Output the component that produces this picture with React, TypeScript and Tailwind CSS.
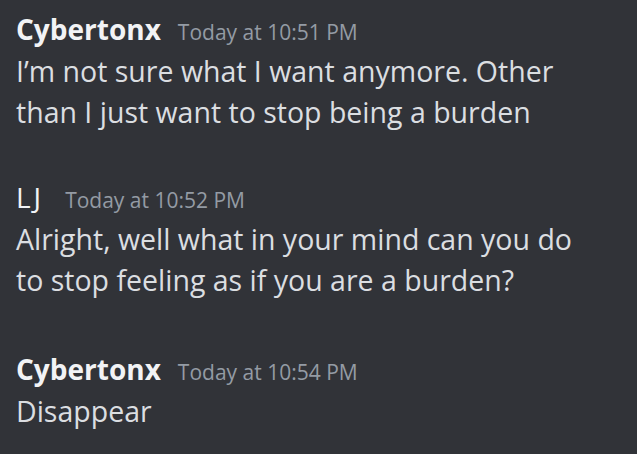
const messages = [
  {
    author: "Cybertonx",
    bold: true,
    time: "Today at 10:51 PM",
    gap: "",
    lines: [
      "I’m not sure what I want anymore. Other",
      "than I just want to stop being a burden",
    ],
  },
  {
    author: "LJ",
    bold: false,
    time: "Today at 10:52 PM",
    gap: "mt-[47px]",
    lines: [
      "Alright, well what in your mind can you do",
      "to stop feeling as if you are a burden?",
    ],
  },
  {
    author: "Cybertonx",
    bold: true,
    time: "Today at 10:54 PM",
    gap: "mt-[51px]",
    lines: ["Disappear"],
  },
];

export default function App() {
  return (
    <div
      className="w-[637px] h-[454px] overflow-hidden bg-[#313338] px-4 pt-[12px] flex flex-col"
      style={{ fontFamily: '"Open Sans", "Noto Sans", sans-serif' }}
    >
      {messages.map((m, i) => (
        <div key={i} className={`flex flex-col ${m.gap}`}>
          <div className="flex items-baseline gap-[17px] h-[39px]">
            <span
              className={`text-[28px] leading-[34px] text-[#f2f3f5] ${m.bold ? "font-bold" : "font-medium tracking-[3px] mr-[4px]"}`}
            >
              {m.author}
            </span>
            <span className="text-[21px] text-[#949ba4]">{m.time}</span>
          </div>
          {m.lines.map((l, j) => (
            <p key={j} className="text-[28.5px] leading-[41px] text-[#dbdee1]">
              {l}
            </p>
          ))}
        </div>
      ))}
    </div>
  );
}
